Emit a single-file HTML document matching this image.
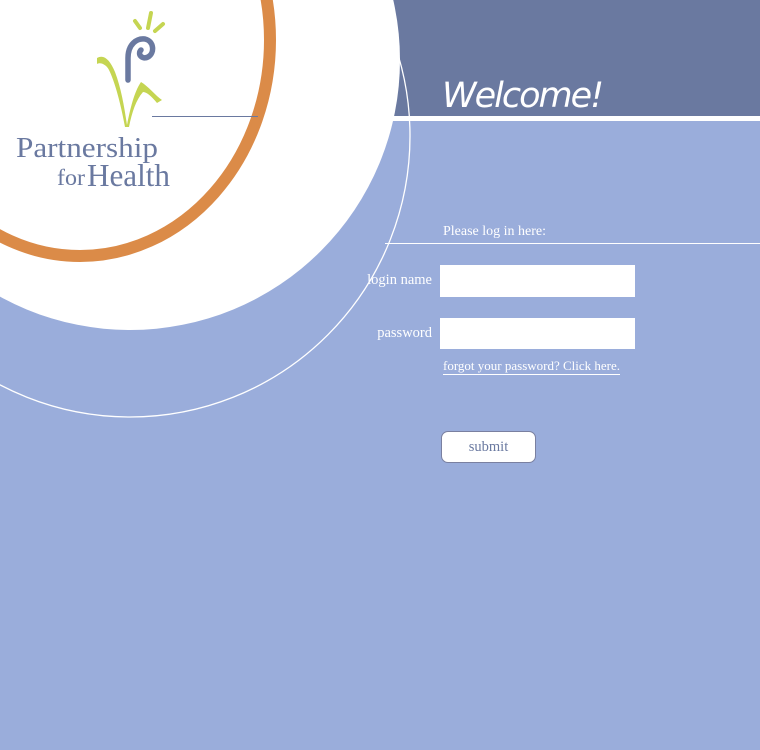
<!DOCTYPE html>
<html><head><meta charset="utf-8"><style>
html,body{margin:0;padding:0}
body{width:760px;height:750px;background:#9aaddb;position:relative;overflow:hidden;font-family:"Liberation Serif",serif}
.a{position:absolute}
</style></head><body>
<div class="a" style="left:385px;top:0;width:375px;height:116px;background:#6a79a0"></div>
<div class="a" style="left:385px;top:116px;width:375px;height:5px;background:#fff"></div>
<div class="a" style="left:385px;top:243px;width:375px;height:1px;background:#fff"></div>
<svg class="a" style="left:0;top:0" width="760" height="750">
<ellipse cx="130" cy="136" rx="280" ry="281" fill="none" stroke="#fff" stroke-width="1.3"/>
<circle cx="130" cy="60" r="270" fill="#fff"/>
<ellipse cx="80" cy="40" rx="190" ry="216" fill="none" stroke="#db8b48" stroke-width="12"/>
<line x1="152" y1="116.5" x2="258" y2="116.5" stroke="#6a79a0" stroke-width="1"/>
<g stroke="#c5d552" stroke-width="4" stroke-linecap="round" fill="none">
<line x1="151" y1="13" x2="148" y2="28"/>
<line x1="135" y1="21" x2="140" y2="28"/>
<line x1="163" y1="24" x2="155" y2="31"/>
</g>
<path d="M97 58 C104 54 110 60 115 72 C121 88 124 105 127 125 C130 110 134 92 141 82 C148 86 156 96 162 100 L157 103 C152 97 147 92 143 92 C136 100 132 112 129 127 L125 127 C121 105 115 82 109 70 C106 64 100 62 97 64 Z" fill="#c5d552"/>
<path d="M128 80 L128 58 C128 44 137 38 145 39 C154 41 155 53 148 57 C142 60 137 54 141 50" fill="none" stroke="#6a79a0" stroke-width="5.5" stroke-linecap="round"/>
<text x="16" y="157" font-family="Liberation Serif" font-size="29" fill="#6a79a0" textLength="142" lengthAdjust="spacingAndGlyphs">Partnership</text>
<text x="57" y="185" font-family="Liberation Serif" font-size="23" fill="#6a79a0" textLength="28" lengthAdjust="spacingAndGlyphs">for</text>
<text x="87" y="186" font-family="Liberation Serif" font-size="32" fill="#6a79a0" textLength="83" lengthAdjust="spacingAndGlyphs">Health</text>
</svg>
<div class="a" style="left:442px;top:76px;font-family:'DejaVu Sans',sans-serif;font-style:italic;font-size:35px;color:#fff;letter-spacing:-2px">Welcome!</div>
<div class="a" style="left:443px;top:224px;font-size:14px;color:#fff">Please log in here:</div>
<div class="a" style="left:330px;top:272px;width:102px;text-align:right;font-size:14.5px;color:#fff">login name</div>
<div class="a" style="left:330px;top:325px;width:102px;text-align:right;font-size:14.5px;color:#fff">password</div>
<div class="a" style="left:440px;top:265px;width:195px;height:32px;background:#fff"></div>
<div class="a" style="left:440px;top:318px;width:195px;height:31px;background:#fff"></div>
<div class="a" style="left:443px;top:358px;font-size:13px;color:#fff;border-bottom:1px solid #fff;padding-bottom:1px;line-height:15px">forgot your password? Click here.</div>
<div class="a" style="left:441px;top:431px;width:93px;height:30px;background:#fff;border:1px solid #7a80a0;border-radius:7px;text-align:center;line-height:30px;font-size:14.5px;color:#6a79a0">submit</div>
</body></html>
